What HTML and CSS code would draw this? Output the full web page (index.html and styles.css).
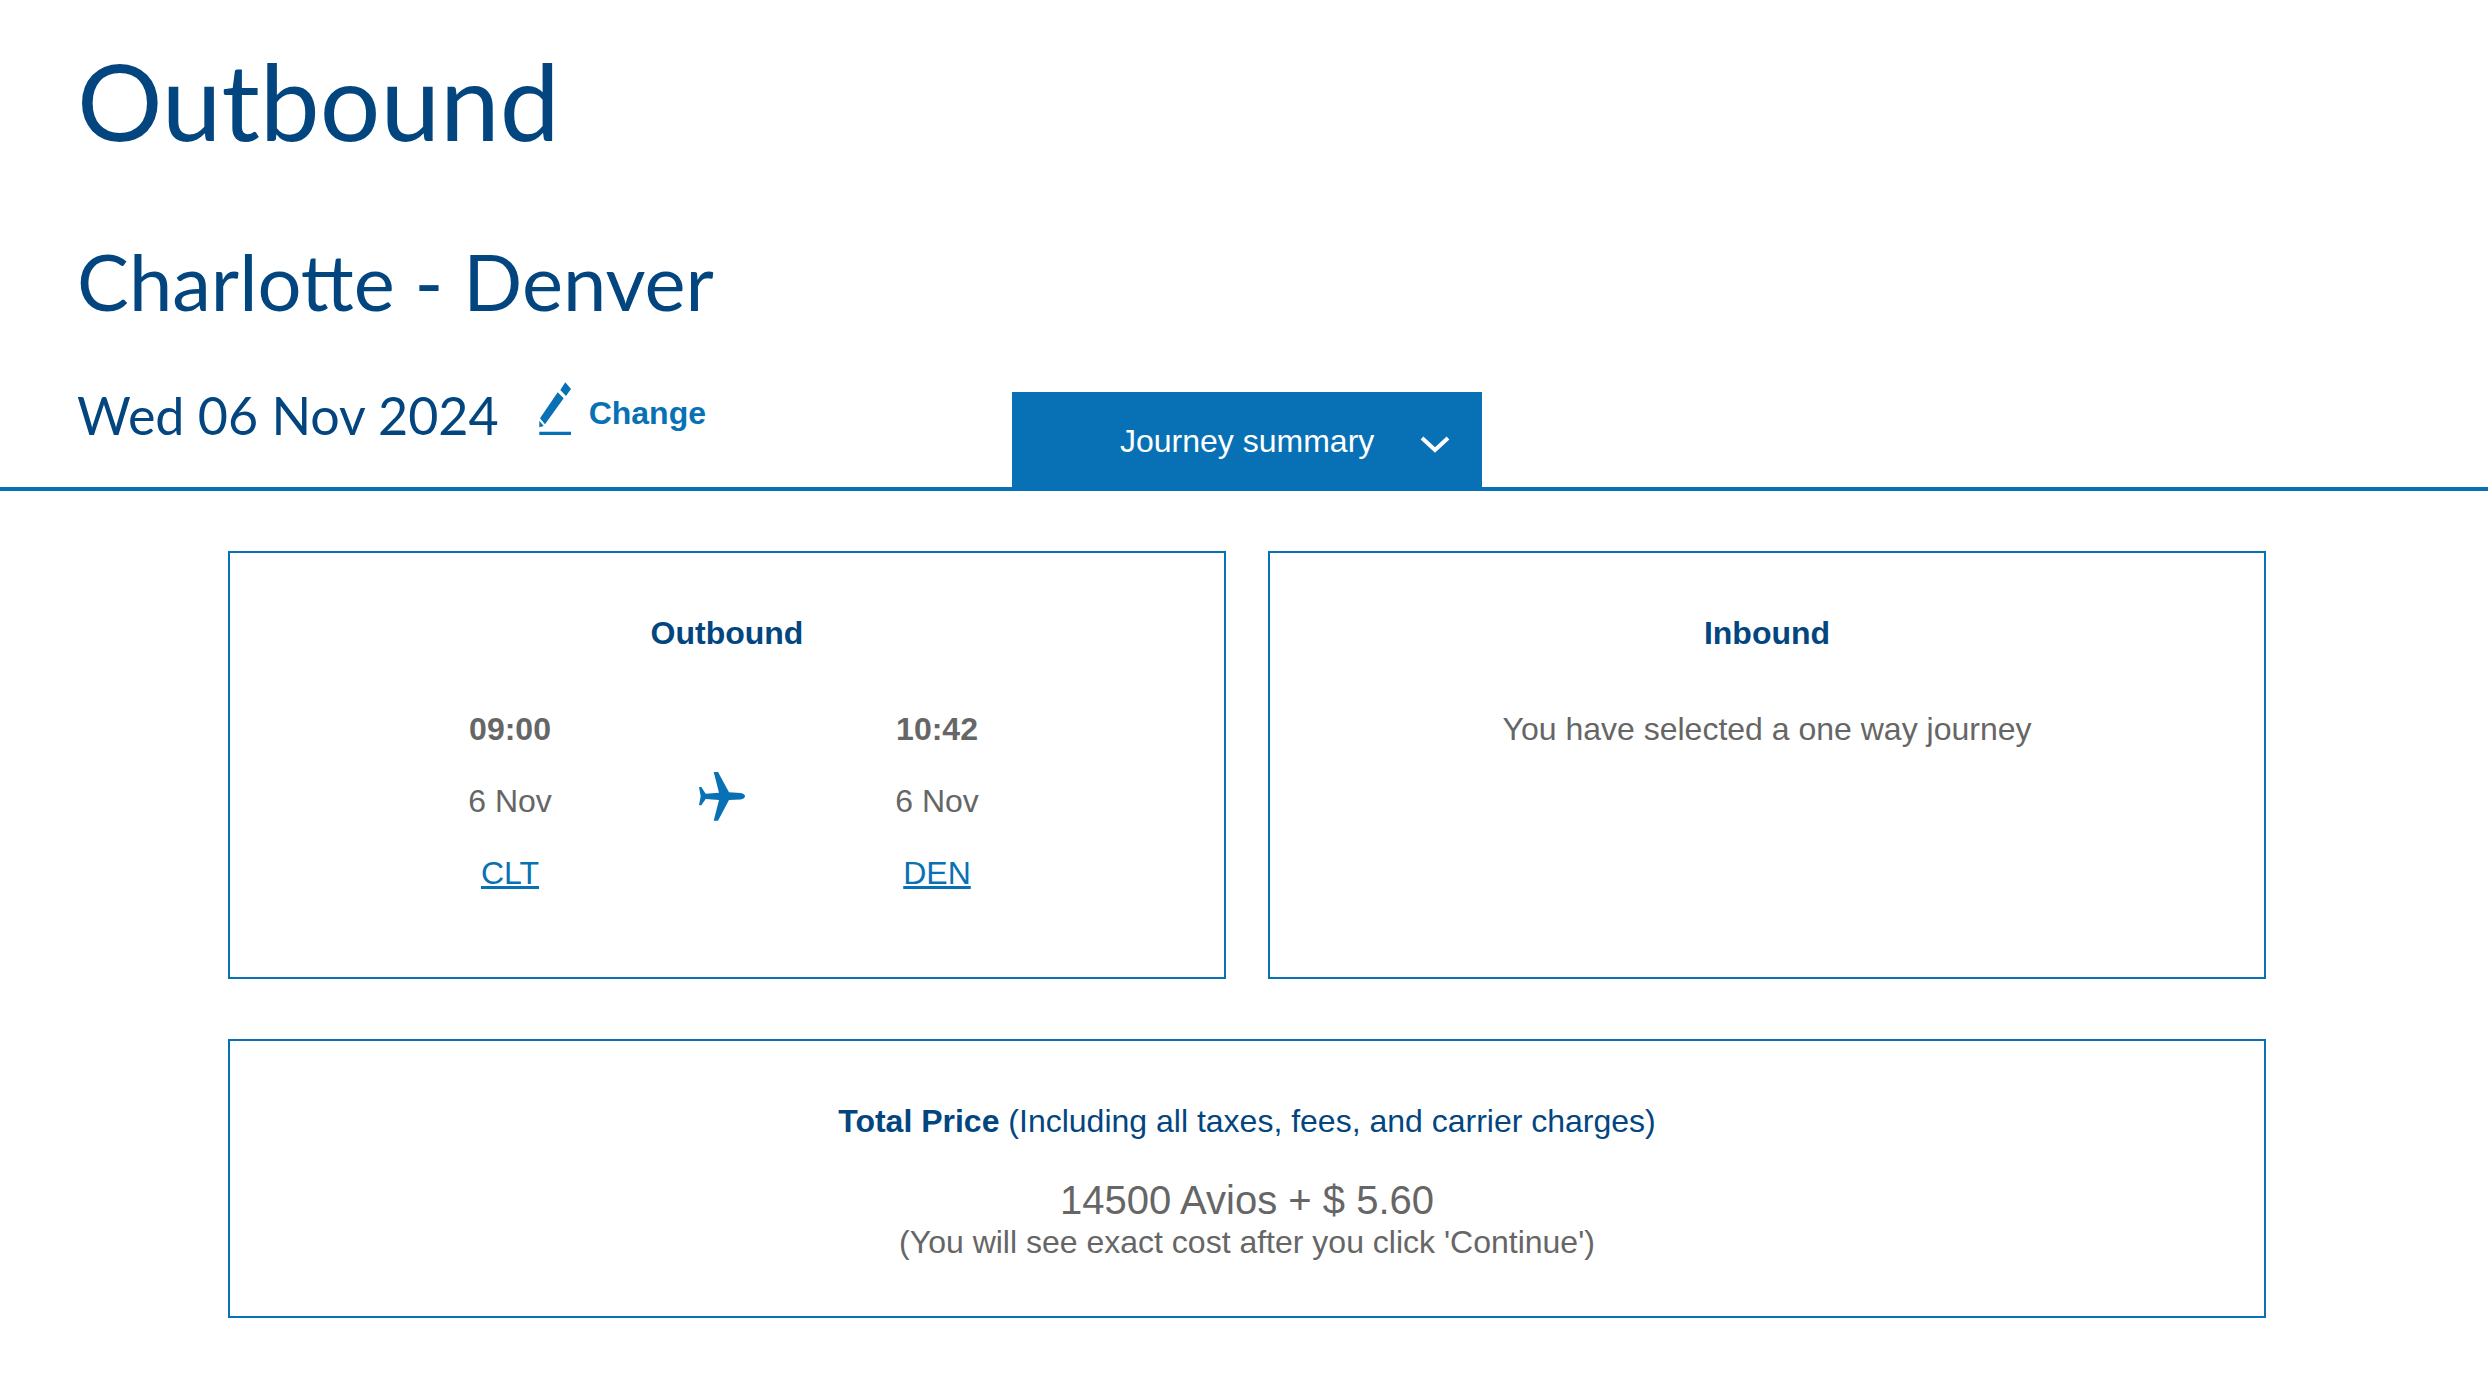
FILE: index.html
```html
<!DOCTYPE html>
<html lang="en">
<head>
<meta charset="utf-8">
<title>Outbound</title>
<link rel="stylesheet" href="styles.css">
</head>
<body>
<header class="head">
  <h1 class="title">Outbound</h1>
  <h2 class="route">Charlotte - Denver</h2>
  <div class="date-row">
    <div class="date-block">
      <span class="date">Wed 06 Nov 2024</span>
      <a class="change" href="#">
        <svg class="pencil" viewBox="0 0 33 53" width="33" height="53" aria-hidden="true">
          <path d="M26.3.3 32 7 27 14 21.3 8Z M18.7 10.3 24.7 16.3 6 42.3 1 36.3Z M.3 38.7 4.7 44 .3 45.3Z M.3 49.7H32V53H.3Z" fill="#0871b5"/>
        </svg>
        <span>Change</span>
      </a>
    </div>
    <button class="tab" type="button">
      <span>Journey summary</span>
      <svg class="chev" viewBox="0 0 32 20" width="32" height="20" aria-hidden="true">
        <path d="M3 4 16 16 29 4" fill="none" stroke="#fff" stroke-width="4"/>
      </svg>
    </button>
  </div>
</header>
<main class="main">
  <div class="pair">
    <section class="panel">
      <h3 class="panel-title">Outbound</h3>
      <div class="journey">
        <div class="stop">
          <b>09:00</b>
          <span>6 Nov</span>
          <a href="#">CLT</a>
        </div>
        <svg class="plane" viewBox="0 0 46 49" width="46" height="49" aria-hidden="true">
          <path d="M14.7 0H19L30 20.3 41.5 20.9C44.5 21.2 46 23 46 24.3S44.5 27.3 41.5 27.6L30 28 19 48.7H14.7L20 28 6.7 27 2.3 33.3H0L1.7 24.3 0 15H2.3L6.7 21.7 20 20.8Z" fill="#0871b5"/>
        </svg>
        <div class="stop">
          <b>10:42</b>
          <span>6 Nov</span>
          <a href="#">DEN</a>
        </div>
      </div>
    </section>
    <section class="panel">
      <h3 class="panel-title">Inbound</h3>
      <p class="oneway">You have selected a one way journey</p>
    </section>
  </div>
  <section class="panel total">
    <p class="total-title"><b>Total Price</b> (Including all taxes, fees, and carrier charges)</p>
    <p class="amount">14500 Avios + $ 5.60</p>
    <p class="note">(You will see exact cost after you click 'Continue')</p>
  </section>
</main>
</body>
</html>
```
FILE: styles.css
```css
* { box-sizing: border-box; }
html, body { margin: 0; padding: 0; background: #fff; }
body { font-family: "Liberation Sans", Arial, sans-serif; font-size: 32px; color: #666; }
.head { border-bottom: 4px solid #0871b5; height: 491px; padding: 40px 0 0 77px; display: flex; flex-direction: column; }
.title, .route, .date { font-family: "Lato", sans-serif; font-weight: 400; color: #03467f; }
.title { margin: 0; font-size: 107px; line-height: 120px; }
.route { margin: 76px 0 0; font-size: 77.7px; line-height: 90px; }
.date-row { display: flex; margin-top: 39px; flex: 1; }
.date-block { width: 935px; display: flex; align-items: flex-start; gap: 40px; }
.date { font-size: 52px; line-height: 72px; white-space: nowrap; padding-top: 14px; }
.change { display: flex; align-items: flex-start; gap: 17px; font-weight: 700; color: #0871b5; text-decoration: none; line-height: 40px; padding-top: 17px; }
.change span { padding-top: 11px; }
.tab { width: 470px; height: 95px; align-self: flex-end; padding: 3px 31px 0 108px; border: 0; background: #0871b5; color: #fff; font: inherit; display: flex; align-items: center; justify-content: space-between; }
.chev { margin-top: 5px; }
.main { padding: 60px 222px 0 228px; }
.pair { display: flex; gap: 42px; }
.panel { border: 2px solid #0871b5; text-align: center; }
.pair .panel { width: 998px; height: 428px; padding-top: 60px; }
.panel-title { margin: 0; font-size: 32px; line-height: 40px; color: #03467f; font-weight: 700; }
.journey { display: flex; margin-top: 56px; padding-left: 180px; }
.stop { width: 200px; display: flex; flex-direction: column; gap: 32px; line-height: 40px; align-items: center; }
.stop a { color: #0871b5; }
.plane { margin: 63px 92px 0 89px; flex: none; }
.oneway { margin: 56px 0 0; line-height: 40px; }
.total { margin-top: 60px; width: 2038px; height: 279px; padding-top: 60px; }
.total p { margin: 0; }
.total-title { color: #03467f; line-height: 40px; }
.amount { font-size: 40px; line-height: 46px; margin-top: 36px !important; }
.note { line-height: 36px; margin-top: 1px !important; }
```
